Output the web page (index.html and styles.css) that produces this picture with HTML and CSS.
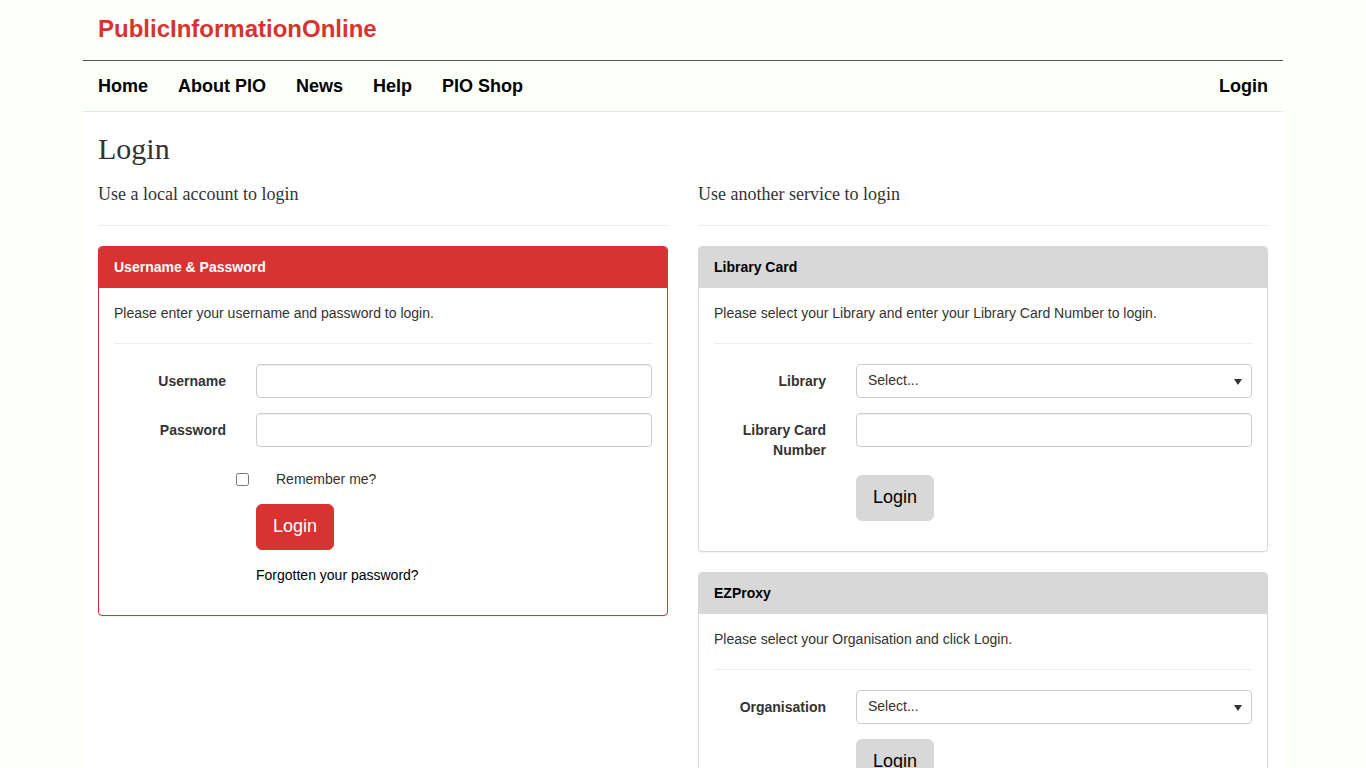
FILE: index.html
```html
<!DOCTYPE html>
<html lang="en">
<head>
    <meta charset="UTF-8">
    <meta name="viewport" content="width=device-width, initial-scale=1.0">
    <title>Login - PublicInformationOnline</title>
    <link rel="stylesheet" href="styles.css">
</head>
<body>
    <div class="container">
        <header>
            <a class="brand" href="#">PublicInformationOnline</a>
            <nav class="navbar">
                <a href="#">Home</a>
                <a href="#">About PIO</a>
                <a href="#">News</a>
                <a href="#">Help</a>
                <a href="#">PIO Shop</a>
                <a class="nav-right" href="#">Login</a>
            </nav>
        </header>

        <main class="content">
            <h2>Login</h2>
            <div class="columns">
                <!-- Local account -->
                <section>
                    <h4>Use a local account to login</h4>
                    <hr>
                    <div class="panel panel-primary">
                        <div class="panel-heading">Username &amp; Password</div>
                        <form class="panel-body" action="#" method="post">
                            <p>Please enter your username and password to login.</p>
                            <hr>
                            <div class="form-group">
                                <label class="control-label" for="username">Username</label>
                                <div class="field">
                                    <input class="form-control" type="text" id="username" name="username">
                                </div>
                            </div>
                            <div class="form-group">
                                <label class="control-label" for="password">Password</label>
                                <div class="field">
                                    <input class="form-control" type="password" id="password" name="password">
                                </div>
                            </div>
                            <div class="form-group">
                                <div class="field checkbox">
                                    <input type="checkbox" id="rememberMe" name="rememberMe">
                                    <label for="rememberMe">Remember me?</label>
                                </div>
                            </div>
                            <div class="form-group">
                                <div class="field">
                                    <button class="btn btn-primary" type="submit">Login</button>
                                </div>
                            </div>
                            <div class="form-group">
                                <div class="field">
                                    <a class="forgotten" href="#">Forgotten your password?</a>
                                </div>
                            </div>
                        </form>
                    </div>
                </section>

                <!-- Other services -->
                <section>
                    <h4>Use another service to login</h4>
                    <hr>
                    <div class="panel">
                        <div class="panel-heading">Library Card</div>
                        <form class="panel-body" action="#" method="post">
                            <p>Please select your Library and enter your Library Card Number to login.</p>
                            <hr>
                            <div class="form-group">
                                <label class="control-label" for="library">Library</label>
                                <div class="field">
                                    <div class="select-box">
                                        <select class="form-control" id="library" name="library">
                                            <option>Select...</option>
                                        </select>
                                    </div>
                                </div>
                            </div>
                            <div class="form-group">
                                <label class="control-label" for="cardNumber">Library Card Number</label>
                                <div class="field">
                                    <input class="form-control" type="text" id="cardNumber" name="cardNumber">
                                </div>
                            </div>
                            <div class="form-group">
                                <div class="field">
                                    <button class="btn" type="submit">Login</button>
                                </div>
                            </div>
                        </form>
                    </div>

                    <div class="panel">
                        <div class="panel-heading">EZProxy</div>
                        <form class="panel-body" action="#" method="post">
                            <p>Please select your Organisation and click Login.</p>
                            <hr>
                            <div class="form-group">
                                <label class="control-label" for="organisation">Organisation</label>
                                <div class="field">
                                    <div class="select-box">
                                        <select class="form-control" id="organisation" name="organisation">
                                            <option>Select...</option>
                                        </select>
                                    </div>
                                </div>
                            </div>
                            <div class="form-group">
                                <div class="field">
                                    <button class="btn" type="submit">Login</button>
                                </div>
                            </div>
                        </form>
                    </div>
                </section>
            </div>
        </main>
    </div>
</body>
</html>
```
FILE: styles.css
```css
* {
    box-sizing: border-box;
}

body {
    margin: 0;
    font-family: "Liberation Sans", Arial, sans-serif;
    font-size: 14px;
    line-height: 20px;
    color: #333;
    background-color: #fdfff9;
}

a {
    color: #000;
    text-decoration: none;
}

.container {
    max-width: 1200px;
    margin: 0 auto;
}

/* Header */
.brand {
    display: block;
    padding: 14px 15px 16px;
    font-size: 24px;
    font-weight: bold;
    line-height: 30px;
    color: #d73333;
    border-bottom: 1px solid #555;
}

.navbar {
    display: flex;
    border-bottom: 1px solid #e7e7e7;
}

.navbar a {
    padding: 15px;
    font-size: 18px;
    font-weight: bold;
}

.navbar .nav-right {
    margin-left: auto;
}

/* Content */
.content {
    padding: 20px 15px;
    background-color: #fff;
}

h2,
h4 {
    font-family: "Liberation Serif", "Times New Roman", serif;
    font-weight: normal;
}

h2 {
    margin: 0 0 10px;
    font-size: 30px;
    line-height: 33px;
}

h4 {
    margin: 10px 0;
    padding-bottom: 2px;
    font-size: 18px;
    line-height: 18px;
}

hr {
    margin: 20px 0;
    border: 0;
    border-top: 1px solid #eee;
}

.columns {
    display: grid;
    grid-template-columns: 1fr 1fr;
    gap: 30px;
}

/* Panels */
.panel {
    margin-bottom: 20px;
    border: 1px solid #d8d8d8;
    border-radius: 4px;
    background-color: #fff;
    box-shadow: 0 1px 1px rgba(0, 0, 0, 0.05);
}

.panel-heading {
    padding: 10px 15px;
    font-weight: bold;
    color: #000;
    background-color: #d8d8d8;
    border-bottom: 1px solid #d8d8d8;
    border-radius: 3px 3px 0 0;
}

.panel-primary {
    border-color: #d73333;
}

.panel-primary .panel-heading {
    color: #fff;
    background-color: #d73333;
    border-color: #d73333;
}

.panel-body {
    padding: 15px;
}

.panel-body p {
    margin: 0;
}

/* Forms */
.form-group {
    display: flex;
    margin: 0 -15px 15px;
}

.control-label {
    width: 25%;
    padding: 7px 15px 0;
    font-weight: bold;
    text-align: right;
}

.field {
    width: 75%;
    margin-left: auto;
    padding: 0 15px;
}

.form-control {
    display: block;
    width: 100%;
    height: 34px;
    padding: 5px 12px 7px;
    font-family: inherit;
    font-size: 14px;
    line-height: 20px;
    color: #333;
    background-color: #fff;
    border: 1px solid #ccc;
    border-radius: 4px;
    box-shadow: inset 0 1px 1px rgba(0, 0, 0, 0.075);
}

.select-box {
    position: relative;
}

.select-box select {
    appearance: none;
    padding: 5px 11px 7px;
    box-shadow: none;
}

/* Drop-down arrow */
.select-box::after {
    content: "";
    position: absolute;
    top: 15px;
    right: 10px;
    border: 4px solid transparent;
    border-top: 6px solid #333;
    border-bottom: 0;
    pointer-events: none;
}

.checkbox {
    display: flex;
    padding-top: 7px;
}

.checkbox input {
    width: 13px;
    height: 13px;
    margin: 4px 7px 0 -20px;
}

.checkbox label {
    padding-left: 20px;
}

.btn {
    display: block;
    padding: 9px 16px 11px;
    font-family: inherit;
    font-size: 18px;
    line-height: 24px;
    color: #000;
    background-color: #d8d8d8;
    border: 1px solid #d8d8d8;
    border-radius: 6px;
    cursor: pointer;
}

.btn-primary {
    color: #fff;
    background-color: #d73333;
    border-color: #d73333;
}

.forgotten {
    display: block;
}
```
